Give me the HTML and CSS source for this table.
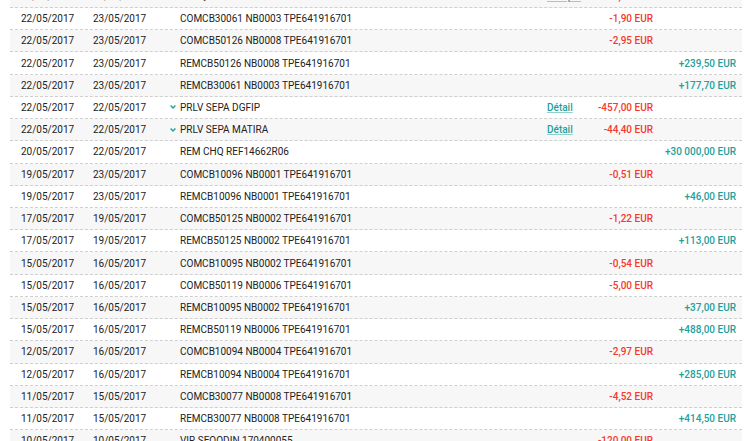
FILE: index.html
```html
<!DOCTYPE html>
<html lang="fr">
<head>
<meta charset="utf-8">
<title>Opérations</title>
<link rel="stylesheet" href="styles.css">
</head>
<body>
<div class="ops">
  <div class="row"><span>22/05/2017</span><span>22/05/2017</span><span></span><span class="lbl">CHEQUE 3706005</span><a class="det">Chèque</a><span class="deb">-2 357,00 EUR</span><span></span></div>
  <div class="row"><span>22/05/2017</span><span>23/05/2017</span><span></span><span class="lbl">COMCB30061 NB0003 TPE641916701</span><span></span><span class="deb">-1,90 EUR</span><span></span></div>
  <div class="row"><span>22/05/2017</span><span>23/05/2017</span><span></span><span class="lbl">COMCB50126 NB0008 TPE641916701</span><span></span><span class="deb">-2,95 EUR</span><span></span></div>
  <div class="row"><span>22/05/2017</span><span>23/05/2017</span><span></span><span class="lbl">REMCB50126 NB0008 TPE641916701</span><span></span><span></span><span class="cre">+239,50 EUR</span></div>
  <div class="row"><span>22/05/2017</span><span>23/05/2017</span><span></span><span class="lbl">REMCB30061 NB0003 TPE641916701</span><span></span><span></span><span class="cre">+177,70 EUR</span></div>
  <div class="row"><span>22/05/2017</span><span>22/05/2017</span><span class="chev"><svg width="6" height="4" viewBox="0 0 6 4"><path d="M0.6 0.6 L3 3 L5.4 0.6" fill="none" stroke="#1fa09b" stroke-width="1.4"/></svg></span><span class="lbl">PRLV SEPA DGFIP</span><a class="det">Détail</a><span class="deb">-457,00 EUR</span><span></span></div>
  <div class="row"><span>22/05/2017</span><span>22/05/2017</span><span class="chev"><svg width="6" height="4" viewBox="0 0 6 4"><path d="M0.6 0.6 L3 3 L5.4 0.6" fill="none" stroke="#1fa09b" stroke-width="1.4"/></svg></span><span class="lbl">PRLV SEPA MATIRA</span><a class="det">Détail</a><span class="deb">-44,40 EUR</span><span></span></div>
  <div class="row"><span>20/05/2017</span><span>22/05/2017</span><span></span><span class="lbl">REM CHQ REF14662R06</span><span></span><span></span><span class="cre">+30 000,00 EUR</span></div>
  <div class="row"><span>19/05/2017</span><span>23/05/2017</span><span></span><span class="lbl">COMCB10096 NB0001 TPE641916701</span><span></span><span class="deb">-0,51 EUR</span><span></span></div>
  <div class="row"><span>19/05/2017</span><span>23/05/2017</span><span></span><span class="lbl">REMCB10096 NB0001 TPE641916701</span><span></span><span></span><span class="cre">+46,00 EUR</span></div>
  <div class="row"><span>17/05/2017</span><span>19/05/2017</span><span></span><span class="lbl">COMCB50125 NB0002 TPE641916701</span><span></span><span class="deb">-1,22 EUR</span><span></span></div>
  <div class="row"><span>17/05/2017</span><span>19/05/2017</span><span></span><span class="lbl">REMCB50125 NB0002 TPE641916701</span><span></span><span></span><span class="cre">+113,00 EUR</span></div>
  <div class="row"><span>15/05/2017</span><span>16/05/2017</span><span></span><span class="lbl">COMCB10095 NB0002 TPE641916701</span><span></span><span class="deb">-0,54 EUR</span><span></span></div>
  <div class="row"><span>15/05/2017</span><span>16/05/2017</span><span></span><span class="lbl">COMCB50119 NB0006 TPE641916701</span><span></span><span class="deb">-5,00 EUR</span><span></span></div>
  <div class="row"><span>15/05/2017</span><span>16/05/2017</span><span></span><span class="lbl">REMCB10095 NB0002 TPE641916701</span><span></span><span></span><span class="cre">+37,00 EUR</span></div>
  <div class="row"><span>15/05/2017</span><span>16/05/2017</span><span></span><span class="lbl">REMCB50119 NB0006 TPE641916701</span><span></span><span></span><span class="cre">+488,00 EUR</span></div>
  <div class="row"><span>12/05/2017</span><span>16/05/2017</span><span></span><span class="lbl">COMCB10094 NB0004 TPE641916701</span><span></span><span class="deb">-2,97 EUR</span><span></span></div>
  <div class="row"><span>12/05/2017</span><span>16/05/2017</span><span></span><span class="lbl">REMCB10094 NB0004 TPE641916701</span><span></span><span></span><span class="cre">+285,00 EUR</span></div>
  <div class="row"><span>11/05/2017</span><span>15/05/2017</span><span></span><span class="lbl">COMCB30077 NB0008 TPE641916701</span><span></span><span class="deb">-4,52 EUR</span><span></span></div>
  <div class="row"><span>11/05/2017</span><span>15/05/2017</span><span></span><span class="lbl">REMCB30077 NB0008 TPE641916701</span><span></span><span></span><span class="cre">+414,50 EUR</span></div>
  <div class="row"><span>10/05/2017</span><span>10/05/2017</span><span></span><span class="lbl">VIR SEQODIN 170400055</span><span></span><span class="deb">-120,00 EUR</span><span></span></div>
</div>
</body>
</html>
```

FILE: styles.css
```css
html, body {
  margin: 0;
  padding: 0;
  background: #fff;
  overflow: hidden;
}
body {
  font-family: Roboto, "Liberation Sans", sans-serif;
  font-size: 10px;
  color: #222;
}
.ops {
  margin: -14.22px 12px 0 10px;
}
.row {
  display: grid;
  grid-template-columns: 72px 77px 10px 367px 43px 63px 83px;
  align-items: center;
  height: 22.22px;
  box-sizing: border-box;
  padding: 0 6px 0 11px;
  border-bottom: 1px dashed #cfcfcf;
  white-space: nowrap;
}
.row:nth-child(odd) {
  background: #f7f7f7;
}
.chev {
  display: flex;
  align-items: center;
}
.chev svg {
  display: block;
}
.det {
  color: #1fa09b;
  font-weight: 500;
  text-decoration: underline;
  text-decoration-color: #8fd0cd;
}
.deb {
  color: #f5392b;
  font-weight: 500;
  text-align: right;
}
.cre {
  color: #1fa09b;
  font-weight: 500;
  text-align: right;
}
```
